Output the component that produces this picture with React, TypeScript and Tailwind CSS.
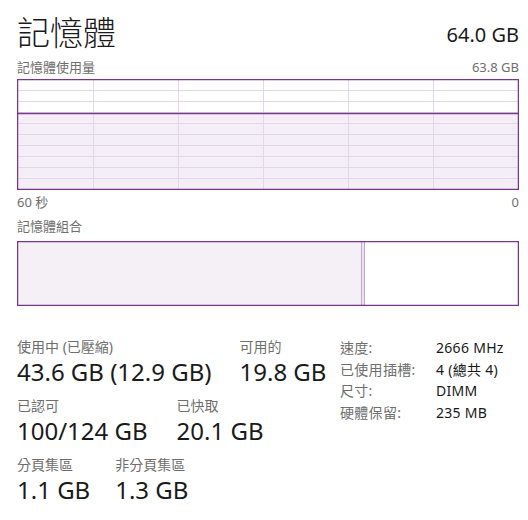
import React from "react";

const FONT = '"Segoe UI", "Noto Sans", "Noto Sans CJK TC", sans-serif';

function UsageGraph() {
  const w = 502;
  const h = 111;
  const hLines = [];
  for (let i = 1; i < 10; i++) hLines.push(Math.round((i * (h - 1)) / 10) + 0.5);
  const vLines = [76, 161, 246, 331, 416].map((x) => x + 0.5);
  const fillTop = 34;
  return (
    <svg width={w} height={h} className="block">
      <rect x={0} y={0} width={w} height={h} fill="#ffffff" />
      <rect x={0} y={fillTop} width={w} height={h - fillTop} fill="#f4eff6" />
      {hLines.map((y) => (
        <line key={"h" + y} x1={0} x2={w} y1={y} y2={y} stroke="#e3d6e8" strokeWidth={1} />
      ))}
      {vLines.map((x) => (
        <line key={"v" + x} x1={x} x2={x} y1={0} y2={h} stroke="#e3d6e8" strokeWidth={1} />
      ))}
      <line x1={0} x2={w} y1={fillTop + 0.5} y2={fillTop + 0.5} stroke="#7d3a92" strokeWidth={1.5} />
      <rect x={0.5} y={0.5} width={w - 1} height={h - 1} fill="none" stroke="#7a3490" strokeWidth={1.5} />
    </svg>
  );
}

function CompositionBar() {
  const w = 502;
  const h = 65;
  return (
    <svg width={w} height={h} className="block">
      <rect x={0} y={0} width={w} height={h} fill="#ffffff" />
      <rect x={0} y={0} width={344} height={h} fill="#f4f0f5" />
      <rect x={344} y={0} width={4} height={h} fill="#ece2f0" />
      <line x1={344.5} x2={344.5} y1={0} y2={h} stroke="#c7a6d2" strokeWidth={1} />
      <line x1={347.5} x2={347.5} y1={0} y2={h} stroke="#c7a6d2" strokeWidth={1} />
      <rect x={0.5} y={0.5} width={w - 1} height={h - 1} fill="none" stroke="#7a3490" strokeWidth={1.5} />
    </svg>
  );
}

function Stat({ label, value }: { label: string; value: string }) {
  return (
    <div className="flex flex-col">
      <div className="text-[14px] leading-[20px] text-[#6e6e6e] whitespace-nowrap">{label}</div>
      <div className="text-[24px] leading-[29px] text-[#1a1a1a] whitespace-nowrap">{value}</div>
    </div>
  );
}

export default function App() {
  const info: [string, string][] = [
    ["速度:", "2666 MHz"],
    ["已使用插槽:", "4 (總共 4)"],
    ["尺寸:", "DIMM"],
    ["硬體保留:", "235 MB"],
  ];
  return (
    <div className="w-[528px] h-[520px] bg-white pl-[17px] pr-[9px] overflow-hidden" style={{ fontFamily: FONT }}>
      <div className="flex items-end justify-between pt-[12px] h-[51px]">
        <div className="text-[33px] leading-[36px] font-light text-[#1a1a1a]">記憶體</div>
        <div className="text-[20px] leading-[26px] text-[#1a1a1a] mb-[3px]">64.0 GB</div>
      </div>
      <div className="flex justify-between items-end h-[28px] pb-[4px] text-[13px] leading-[15px] text-[#6e6e6e]">
        <span>記憶體使用量</span>
        <span>63.8 GB</span>
      </div>
      <UsageGraph />
      <div className="flex justify-between mt-[5px] text-[13px] leading-[15px] text-[#6e6e6e]">
        <span>60 秒</span>
        <span>0</span>
      </div>
      <div className="mt-[9px] text-[13px] leading-[15px] text-[#6e6e6e]">記憶體組合</div>
      <div className="mt-[7px]">
        <CompositionBar />
      </div>
      <div className="flex mt-[31px]">
        <div className="flex flex-col gap-[10px] w-[323px]">
          <div className="flex gap-[28px]">
            <Stat label="使用中 (已壓縮)" value="43.6 GB (12.9 GB)" />
            <Stat label="可用的" value="19.8 GB" />
          </div>
          <div className="flex gap-[29px]">
            <Stat label="已認可" value="100/124 GB" />
            <Stat label="已快取" value="20.1 GB" />
          </div>
          <div className="flex gap-[25px]">
            <Stat label="分頁集區" value="1.1 GB" />
            <Stat label="非分頁集區" value="1.3 GB" />
          </div>
        </div>
        <div className="flex flex-col text-[14px] leading-[21.7px] tracking-[0.3px]">
          {info.map(([k, v]) => (
            <div key={k} className="flex">
              <span className="w-[96px] text-[#6e6e6e]">{k}</span>
              <span className="text-[#1a1a1a]">{v}</span>
            </div>
          ))}
        </div>
      </div>
    </div>
  );
}
